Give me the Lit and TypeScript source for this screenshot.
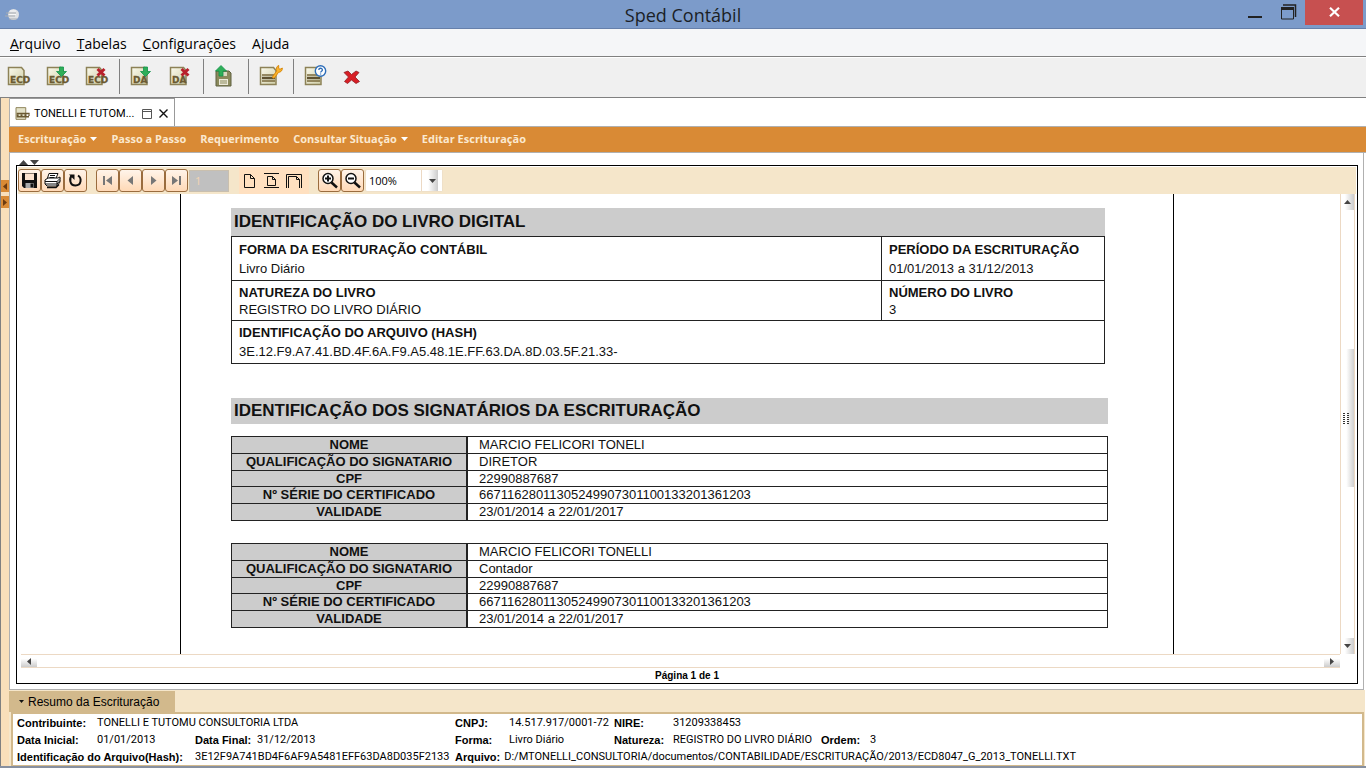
import { LitElement, html, css, svg } from "lit";
import { customElement, property } from "lit/decorators.js";

const sheet = svg`
  <path d="M.5 2.500h13l2.500 3v14H.5z" fill="url(#paper)" stroke="#8d8257" stroke-width="1.500"/>
`;
const lines = svg`
  <path d="M2 10h13M2 16h13" stroke="#7a6a3c" stroke-width="1.500"/>
  <path d="M2 13h13" stroke="#5f5230" stroke-width="2.500"/>
`;
const word = (t: string) => svg`<text x="2" y="17.500" font-family="DejaVu Sans" font-weight="700" font-size="9" fill="#6b5a32" stroke="#6b5a32" stroke-width=".3">${t}</text>`;
const down = svg`<path d="M12.500 2h4v4.500h3L14.500 11.500 9.500 6.500h3z" fill="#2fae58" stroke="#12934a" stroke-width=".8"/>`;
const cross = svg`<path d="M11.500 4l7 6.500M18.500 4l-7 6.500" stroke="#b8202c" stroke-width="3"/>`;
const defs = svg`<defs>
  <linearGradient id="paper" x1="0" y1="0" x2="1" y2="1"><stop offset="0" stop-color="#fbfaec"/><stop offset="1" stop-color="#d0cea8"/></linearGradient>
</defs>`;

const big: Record<string, unknown> = {
  ecd: svg`${sheet}${word("ECD")}`,
  ecdDown: svg`${sheet}${word("ECD")}${down}`,
  ecdDel: svg`${sheet}${word("ECD")}${cross}`,
  daDown: svg`${sheet}${word("DA")}${down}`,
  daDel: svg`${sheet}${word("DA")}${cross}`,
  save: svg`<path d="M1 6h13l2 2v13H1z" fill="#8b8a5c" stroke="#5f6040"/><path d="M4 14h9v6H4z" fill="#eceada"/><path d="M5 16h7M5 18h7" stroke="#8b8a5c"/><path d="M5 7h7v4H5z" fill="#d9d8c0"/><path d="M4 11V6H.5L6 .5 11.500 6H8v5z" fill="#2fae58" stroke="#12934a" stroke-width=".8"/>`,
  wrench: svg`${sheet}${lines}<path d="M14.200 11.500l4-5.500c-1-2-.3-4.600 2-5.600v3l1.300.9 2.300-1.300c.2 2.600-1.500 4.300-3.800 4.300l-3.800 5.400c-1.300 1-2.900 0-2-1.200z" transform="translate(-1.500 0)" fill="#fbb32a" stroke="#d98a0c" stroke-width="1"/>`,
  help: svg`${sheet}${lines}<circle cx="15.500" cy="6" r="5.200" fill="#fff" stroke="#2d6db8" stroke-width="1.400"/><path d="M13.800 5c0-2.300 3.600-2.300 3.600-.1 0 1.300-1.800 1.300-1.800 2.600M15.600 8.600v1" fill="none" stroke="#2d6db8" stroke-width="1.300"/>`,
  close: svg`<path d="M0 7.500L4 6l3.500 3.500L12 6l3 1.500-4 4.500 4.500 4.500-3.500 2L7.500 15l-4 3.500-3-2 4-4.500z" fill="#d81f26" stroke="#8f1d22" stroke-width=".8"/>`,
};

const small: Record<string, unknown> = {
  disk: svg`<path d="M1 1h15v15H3l-2-2z" fill="#111"/><path d="M4 1.500h9V8H4z" fill="#fbe3cf"/><path d="M4.500 11h8v5h-8z" fill="#aaa"/><path d="M9.500 11.500h2.500v4H9.500z" fill="#111"/>`,
  print: svg`<path d="M5 1.500h9l-2.500 6H3z" fill="#fff" stroke="#111"/><path d="M6 3.500h5M5.500 5.500h5" stroke="#111"/><path d="M1 8l3-2h10l2-1v5l-3 4H3l-2-2z" fill="#fff" stroke="#111"/><path d="M1 9.500h12l3-3M1 12h12l3-3.500M13 9v5" stroke="#111" fill="none"/><path d="M3 15.500h9l3-3" stroke="#111" fill="none" stroke-width="1.500"/>`,
  reload: svg`<path d="M5 3.500C2 6 2.500 13.500 8.500 13.500S15 6 11 3.500" fill="none" stroke="#111" stroke-width="2"/><path d="M2 2.500h5.500V8z" fill="#111"/>`,
  first: svg`<path d="M4 4h2v9H4zM13 4v9L7 8.500z" fill="#777"/>`,
  prev: svg`<path d="M11 4v9L5.500 8.500z" fill="#777"/>`,
  next: svg`<path d="M6 4v9l5.500-4.500z" fill="#777"/>`,
  last: svg`<path d="M11 4h2v9h-2zM4 4v9l6-4.500z" fill="#777"/>`,
  zin: svg`<circle cx="7" cy="6.500" r="5" fill="#fff" stroke="#111" stroke-width="1.500"/><path d="M4 6.500h6M7 3.500v6" stroke="#111" stroke-width="2"/><path d="M10.500 10.500l5.500 5" stroke="#111" stroke-width="2.500"/>`,
  zout: svg`<circle cx="7" cy="6.500" r="5" fill="#fff" stroke="#111" stroke-width="1.500"/><path d="M4 6.500h6" stroke="#111" stroke-width="2"/><path d="M10.500 10.500l5.500 5" stroke="#111" stroke-width="2.500"/>`,
  page: svg`<path d="M3.500 2.500h6l4 4v9h-10zM9.500 2.500v4h4" fill="none" stroke="#111"/>`,
  fit: svg`<path d="M1 1.500h15M1 15.500h15M4.500 4.500h5l3 3v6h-8zM9.500 4.500v3h3" fill="none" stroke="#111"/>`,
  wide: svg`<path d="M1.500 16V2.500h15V16M3.500 16V4.500h8l3 3V16M11.500 4.500v3h3" fill="none" stroke="#111"/>`,
};

@customElement("ui-icon")
class UiIcon extends LitElement {
  @property() name = "";
  static styles = css`
    :host { display: block; }
    svg { display: block; overflow: visible; }
  `;
  render() {
    return this.name in big
      ? html`<svg width="24" height="24" viewBox="0 0 24 24" aria-hidden="true">${defs}${big[this.name]}</svg>`
      : html`<svg width="17" height="17" viewBox="0 0 17 17" aria-hidden="true">${small[this.name]}</svg>`;
  }
}

@customElement("signer-table")
class SignerTable extends LitElement {
  @property({ attribute: false }) rows: string[][] = [];
  static styles = css`
    :host { display: block; }
    table { width: 100%; border-collapse: collapse; table-layout: fixed; font: 13px/16px "Liberation Sans", Arial, sans-serif; color: #111; }
    th, td { border: 1px solid #222; padding: 0; height: 16px; }
    th { width: 234px; background: #ccc; border-right-width: 2px; text-align: center; }
    td { padding-left: 11px; }
    tr:nth-child(3) { line-height: 15px; }
    tr:nth-child(3) > * { height: 15px; }
  `;
  render() {
    return html`<table><tbody>${this.rows.map(([k, v]) => html`<tr><th scope="row">${k}</th><td>${v}</td></tr>`)}</tbody></table>`;
  }
}

const signers = [
  ["MARCIO FELICORI TONELI", "DIRETOR"],
  ["MARCIO FELICORI TONELLI", "Contador"],
].map(([name, role]) => [
  ["NOME", name],
  ["QUALIFICAÇÃO DO SIGNATARIO", role],
  ["CPF", "22990887687"],
  ["Nº SÉRIE DO CERTIFICADO", "66711628011305249907301100133201361203"],
  ["VALIDADE", "23/01/2014 a 22/01/2017"],
]);

@customElement("app-root")
class AppRoot extends LitElement {
  static styles = css`
    :host {
      display: flex; flex-direction: column; height: 100vh; min-height: 640px; overflow: hidden;
      background: #fff; color: #000; font: 11px/16px "Liberation Sans", Arial, sans-serif;
    }
    * { box-sizing: border-box; }
    button, input, select { font: inherit; color: inherit; margin: 0; }
    button { padding: 0; border: 0; background: none; display: flex; align-items: center; justify-content: center; }
    a { color: inherit; text-decoration: none; }
    svg { display: block; flex: none; }

    .title { flex: none; height: 29px; display: grid; grid-template-columns: 1fr auto 1fr; background: #7c9bca; border-bottom: 1px solid #6680ab; }
    .title h1 { margin: 0; font: 400 18px/30px "Open Sans", "Noto Sans", sans-serif; color: #1b1f26; }
    .app-mark { margin: 8px 0 0 5px; }
    .controls { display: flex; justify-content: flex-end; align-items: flex-start; padding-right: 3px; gap: 8px; }
    .controls button { width: 26px; height: 25px; padding-bottom: 2px; }
    .controls .close { width: 58px; background: #c75050; margin-left: -5px; }

    .menu { flex: none; display: flex; gap: 16px; height: 28px; padding-left: 10px; background: #f5f6f8; border-bottom: 1px solid #808080; font: 14px/29px "Open Sans", "Noto Sans", sans-serif; }
    .tools { flex: none; display: flex; align-items: center; gap: 15px; height: 41px; padding: 0 0 2px 8px; background: #f0f0f0; border-top: 1px solid #fff; border-bottom: 1px solid #808080; }
    .rule { width: 1px; height: 35px; background: #808080; margin: 0 -4px 0 -6px; }

    .work { flex: 1; min-height: 0; display: flex; }
    .side { width: 9px; flex: none; border-left: 1px solid #808080; background: #f9dfba; padding-top: 82px; display: flex; flex-direction: column; gap: 4px; }
    .side button { width: 8px; height: 12px; background: #d98a35; }
    .main { flex: 1; min-width: 0; display: flex; flex-direction: column; }
    .tabs { flex: none; height: 28px; display: flex; border-left: 1px solid #b0b0b0; }
    .tab { display: flex; align-items: center; width: 165px; padding: 2px 0 0 5px; border: 1px solid #999; border-width: 1px 1px 0 0; font-family: Roboto, "Liberation Sans", sans-serif; }
    .tab span { margin: 0 8px 0 4px; line-height: 26px; white-space: nowrap; }
    .tab button { width: 11px; height: 11px; margin-right: 6px; }
    .nav { flex: none; display: flex; gap: 14px; height: 27px; padding-left: 9px; background: #d98a35; border: 1px solid #b0b0b0; border-width: 1px 0; color: #fbe9d0; font: 700 11px/24px "Open Sans", "Noto Sans", sans-serif; }
    .nav a { display: flex; align-items: center; gap: 4px; height: 24px; }

    .panel { flex: 1; min-height: 0; display: flex; flex-direction: column; margin-right: 2px; padding: 5px 5px 5px 6px; border: 1px solid #b0b0b0; border-top: 0; }
    .updown { display: flex; gap: 2px; height: 7px; padding: 2px 0 0 3px; flex: none; }
    .viewer { flex: 1; min-height: 0; display: flex; flex-direction: column; border: 1px solid #000; padding: 1px 1px 0; }
    .bar { flex: none; display: flex; align-items: center; height: 27px; background: #f5e6ca; }
    .bar .key { width: 23px; height: 23px; border: 1px solid #9a6c3e; border-radius: 3px; background: linear-gradient(#fff4ea, #ffd9b6); }
    .group { display: flex; margin-right: 9px; }
    .pagebox { width: 40px; height: 22px; margin: 0 10px 0 -8px; padding: 0 5px; border: 1px solid #c9bfae; background: #c0c0c0; color: #f2d5b4; font: 11px/20px "Open Sans", "Noto Sans", sans-serif; }
    .modes { display: flex; gap: 5px; width: 70px; height: 27px; align-items: center; padding-left: 2px; background: #ffe0c0; margin-right: 9px; }
    .zoom { position: relative; width: 78px; height: 23px; margin-left: -8px; }
    .zoom select { appearance: none; width: 100%; height: 23px; padding: 0 3px; border: 1px solid #efe0c8; border-radius: 2px; background: #fff; font: 11px/20px "Open Sans", "Noto Sans", sans-serif; }
    .drop { position: absolute; top: 1px; right: 1px; bottom: 1px; width: 21px; border-left: 1px solid #ecd9c4; background: linear-gradient(90deg, #fff 30%, #ccc 80%, #fff 81%); display: flex; align-items: center; justify-content: center; pointer-events: none; }

    .canvas { flex: 1; min-height: 0; display: flex; }
    .view { flex: 1; min-width: 0; overflow: hidden; display: flex; justify-content: center; padding-right: 4px; }
    .page { width: 994px; flex: none; padding: 14px 65px 0 50px; border: 1px solid #000; border-width: 0 1px; color: #111; }
    .page h2 { margin: 0; padding-left: 3px; background: #ccc; font: 700 17px/28px "Liberation Sans", Arial, sans-serif; }
    .page h2.second { margin: 34px 0 12px; line-height: 26px; }
    .book { margin-right: 3px; }
    .book table { width: 100%; border-collapse: collapse; table-layout: fixed; font: 13px/16px "Liberation Sans", Arial, sans-serif; }
    .book td { border: 1px solid #222; padding: 4px 7px 2px; vertical-align: top; }
    .book .wide { width: 650px; }
    .book b, .book span { display: block; }
    .book span { line-height: 17px; }
    .book .tall b { line-height: 18px; }
    .book .tall span { line-height: 19px; }
    .book .hash span { line-height: 22px; }
    .book .hash td { padding-bottom: 0; }
    signer-table + signer-table { margin-top: 22px; }

    .vscroll { flex: none; width: 15px; margin-right: 1px; display: flex; flex-direction: column; border: 1px solid #ecd9c4; border-width: 0 1px; }
    .vscroll button { height: 16px; background: linear-gradient(90deg, #fff 30%, #ccc); }
    .track { flex: 1; display: flex; flex-direction: column; padding-left: 2px; }
    .before { flex: 139; }
    .thumb { flex: 138; background: linear-gradient(90deg, #fff 30%, #d0d0d0); display: flex; align-items: center; justify-content: flex-start; }
    .after { flex: 151; }
    .hscroll { flex: none; height: 14px; margin: 0 16px 0 3px; display: flex; justify-content: space-between; border: 1px solid #ecd9c4; border-width: 1px 0; }
    .hscroll button { width: 16px; height: 12px; background: linear-gradient(#fff 30%, #ccc); }
    .count { flex: none; margin: 0; text-align: center; font: 700 10px/15px "Liberation Sans", Arial, sans-serif; }

    .summary { flex: none; margin-right: 1px; padding: 1px 1px 0 0; background: #f5e6ca; }
    .summary h3 { margin: 0; width: 166px; height: 21px; padding-left: 10px; display: flex; align-items: center; gap: 4px; background: #d2b98c; font: 400 12px/22px "Liberation Sans", Arial, sans-serif; }
    .data { margin: 0 0 0 2px; height: 54px; padding: 1px 4px 0; overflow: hidden; background: #fff; border: 2px solid #d2b98c; border-bottom-width: 1px; display: grid; grid-template-columns: 80px 98px 62px 198px 54px 105px 59px 148px 49px auto; grid-auto-rows: 17px; line-height: 16px; white-space: nowrap; justify-content: start; }
    .data dt { font-weight: 700; grid-column-start: 1; }
    .data dd { margin: 0; font-family: Roboto, "Liberation Sans", sans-serif; }
    .data dd b { font-family: "Liberation Sans", Arial, sans-serif; }
    .data .auto { grid-column-start: auto; }
    .data .two { grid-column-end: span 2; }
    .data .three { grid-column-end: span 3; }
    .data .six { grid-column-end: span 6; display: flex; gap: 4px; }
    .edge { flex: none; height: 2px; background: #8790a0; }
  `;

  private tri(dir: "up" | "down" | "left" | "right", color = "#444", w = 7) {
    const h = Math.ceil(w / 2);
    const flat = dir === "up" || dir === "down";
    const d = { up: `M0 ${h}h${w}L${w / 2} 0z`, down: `M0 0h${w}L${w / 2} ${h}z`, left: `M${h} 0v${w}L0 ${w / 2}z`, right: `M0 0v${w}L${h} ${w / 2}z` }[dir];
    return html`<svg width=${flat ? w : h} height=${flat ? h : w} aria-hidden="true"><path d=${d} fill=${color}></path></svg>`;
  }
  private tool = (icon: string, label: string) => html`<button aria-label=${label}><ui-icon name=${icon}></ui-icon></button>`;
  private key = (icon: string, label: string) => html`<button class="key" aria-label=${label}><ui-icon name=${icon}></ui-icon></button>`;

  render() {
    return html`
      <header class="title">
        <svg class="app-mark" width="15" height="14" aria-hidden="true"><circle cx="8.500" cy="6.500" r="5.500" fill="#dfe1e3"/><path d="M1 5h10M0 8h10M4 11h8" stroke="#a9adb2"/><path d="M5 3h6M4 6.500h7" stroke="#f8f8f8"/></svg>
        <h1>Sped Contábil</h1>
        <div class="controls">
          <button aria-label="Minimizar"><svg width="14" height="14"><path d="M0 12h14" stroke="#222" stroke-width="2"/></svg></button>
          <button aria-label="Restaurar"><svg width="16" height="16"><path d="M2 1h12.500v12" fill="none" stroke="#222" stroke-width="1.500"/><path d="M.5 4v11h12V4z" fill="none" stroke="#222"/><path d="M0 4.500h13" stroke="#222" stroke-width="3"/></svg></button>
          <button class="close" aria-label="Fechar"><svg width="11" height="10"><path d="M1 .8l9 8.400M10 .8L1 9.200" stroke="#fff" stroke-width="2.200"/></svg></button>
        </div>
      </header>
      <nav class="menu">
        <a href="#"><u>A</u>rquivo</a><a href="#"><u>T</u>abelas</a><a href="#"><u>C</u>onfigurações</a><a href="#">A<u>j</u>uda</a>
      </nav>
      <div class="tools">
        ${this.tool("ecd", "Escrituração")}${this.tool("ecdDown", "Importar escrituração")}${this.tool("ecdDel", "Excluir escrituração")}
        <div class="rule"></div>
        ${this.tool("daDown", "Importar DA")}${this.tool("daDel", "Excluir DA")}
        <div class="rule"></div>
        ${this.tool("save", "Cópia de segurança")}
        <div class="rule"></div>
        ${this.tool("wrench", "Configurar")}
        <div class="rule"></div>
        ${this.tool("help", "Conteúdo da ajuda")}${this.tool("close", "Sair")}
      </div>
      <div class="work">
        <aside class="side">
          <button aria-label="Recolher">${this.tri("left", "#6b3a10")}</button>
          <button aria-label="Expandir">${this.tri("right", "#6b3a10")}</button>
        </aside>
        <main class="main">
          <div class="tabs"><div class="tab">
            <svg width="15" height="13" viewBox="0 0 22 20" aria-hidden="true"><path d="M1 1h15v18H1z" fill="#e4e2c8" stroke="#8d8257" stroke-width="1.500"/><path d="M2 10h20M2 15h19" stroke="#6b5a32" stroke-width="2"/><path d="M2 12.500h20" stroke="#6b5a32" stroke-width="3" stroke-dasharray="3 3"/></svg>
            <span>TONELLI E TUTOM...</span>
            <button aria-label="Maximizar aba"><svg width="10" height="10"><path d="M.5.5h9v9h-9zM.5 2.500h9" fill="none" stroke="#555"/></svg></button>
            <button aria-label="Fechar aba"><svg width="9" height="9"><path d="M.5.5l8 8M8.500.5l-8 8" stroke="#111" stroke-width="1.400"/></svg></button>
          </div></div>
          <nav class="nav">
            <a href="#">Escrituração ${this.tri("down", "#fff")}</a><a href="#">Passo a Passo</a><a href="#">Requerimento</a><a href="#">Consultar Situação ${this.tri("down", "#fff")}</a><a href="#">Editar Escrituração</a>
          </nav>
          <section class="panel">
            <div class="updown">${this.tri("up", "#444", 9)}${this.tri("down", "#444", 9)}</div>
            <div class="viewer">
              <div class="bar">
                <div class="group">${this.key("disk", "Salvar")}${this.key("print", "Imprimir")}${this.key("reload", "Recarregar")}</div>
                <div class="group">${this.key("first", "Primeira")}${this.key("prev", "Anterior")}${this.key("next", "Próxima")}${this.key("last", "Última")}</div>
                <input class="pagebox" aria-label="Página" value="1" disabled>
                <div class="modes">${this.tool("page", "Tamanho real")}${this.tool("fit", "Ajustar página")}${this.tool("wide", "Ajustar largura")}</div>
                <div class="group">${this.key("zin", "Ampliar")}${this.key("zout", "Reduzir")}</div>
                <div class="zoom"><select aria-label="Zoom"><option>100%</option></select><span class="drop">${this.tri("down", "#444")}</span></div>
              </div>
              <div class="canvas">
                <div class="view"><article class="page">
                  <div class="book">
                    <h2>IDENTIFICAÇÃO DO LIVRO DIGITAL</h2>
                    <table><colgroup><col class="wide"><col></colgroup><tbody>
                      <tr class="tall"><td><b>FORMA DA ESCRITURAÇÃO CONTÁBIL</b><span>Livro Diário</span></td><td><b>PERÍODO DA ESCRITURAÇÃO</b><span>01/01/2013 a 31/12/2013</span></td></tr>
                      <tr><td><b>NATUREZA DO LIVRO</b><span>REGISTRO DO LIVRO DIÁRIO</span></td><td><b>NÚMERO DO LIVRO</b><span>3</span></td></tr>
                      <tr class="hash"><td colspan="2"><b>IDENTIFICAÇÃO DO ARQUIVO (HASH)</b><span>3E.12.F9.A7.41.BD.4F.6A.F9.A5.48.1E.FF.63.DA.8D.03.5F.21.33-</span></td></tr>
                    </tbody></table>
                  </div>
                  <h2 class="second">IDENTIFICAÇÃO DOS SIGNATÁRIOS DA ESCRITURAÇÃO</h2>
                  ${signers.map((rows) => html`<signer-table .rows=${rows}></signer-table>`)}
                </article></div>
                <div class="vscroll">
                  <button aria-label="Rolar para cima">${this.tri("up")}</button>
                  <div class="track"><div class="before"></div><div class="thumb"><svg width="6" height="11"><path d="M1 0v11M5 0v11" stroke="#333" stroke-width="2" stroke-dasharray="1 1"/></svg></div><div class="after"></div></div>
                  <button aria-label="Rolar para baixo">${this.tri("down")}</button>
                </div>
              </div>
              <div class="hscroll">
                <button aria-label="Rolar para a esquerda">${this.tri("left")}</button>
                <button aria-label="Rolar para a direita">${this.tri("right")}</button>
              </div>
              <p class="count">Página 1 de 1</p>
            </div>
          </section>
          <section class="summary">
            <h3>${this.tri("down", "#111", 5)}Resumo da Escrituração</h3>
            <dl class="data">
              <dt>Contribuinte:</dt><dd class="three">TONELLI E TUTOMU CONSULTORIA LTDA</dd>
              <dt class="auto">CNPJ:</dt><dd>14.517.917/0001-72</dd>
              <dt class="auto">NIRE:</dt><dd>31209338453</dd>
              <dt>Data Inicial:</dt><dd>01/01/2013</dd>
              <dt class="auto">Data Final:</dt><dd>31/12/2013</dd>
              <dt class="auto">Forma:</dt><dd>Livro Diário</dd>
              <dt class="auto">Natureza:</dt><dd>REGISTRO DO LIVRO DIÁRIO</dd>
              <dt class="auto">Ordem:</dt><dd>3</dd>
              <dt class="two">Identificação do Arquivo(Hash):</dt><dd class="two">3E12F9A741BD4F6AF9A5481EFF63DA8D035F2133</dd>
              <dd class="six"><b>Arquivo:</b><span>D:/MTONELLI_CONSULTORIA/documentos/CONTABILIDADE/ESCRITURAÇÃO/2013/ECD8047_G_2013_TONELLI.TXT</span></dd>
            </dl>
          </section>
        </main>
      </div>
      <div class="edge"></div>
    `;
  }
}
